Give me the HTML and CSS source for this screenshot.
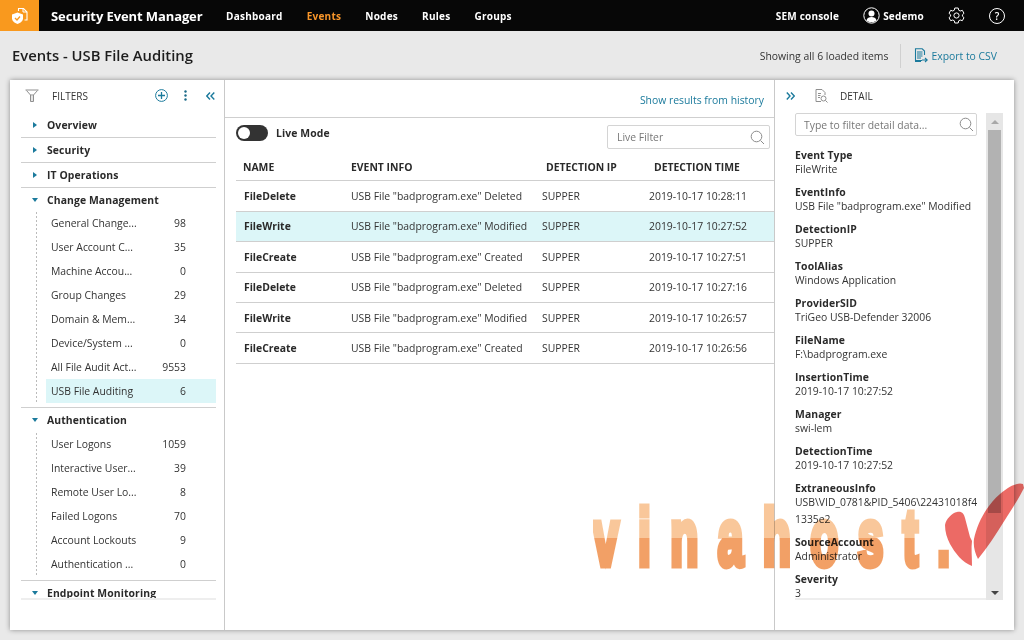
FILE: index.html
```html
<!DOCTYPE html>
<html lang="en">
<head>
<meta charset="utf-8">
<title>Events - USB File Auditing</title>
<link rel="stylesheet" href="styles.css">
</head>
<body>
<header class="topbar">
  <div class="logo">
    <svg width="18" height="18" viewBox="0 0 18 18" fill="none"><path d="M7.500 4V1.500h5l3.500 3.500v8h-2.500" stroke="#fff" stroke-width="1.100"/><path d="M12 1.500V5h4" stroke="#fff" stroke-width="1"/><path d="M6.500 5.500 12 7.500v3.700c0 2.900-2.500 4.600-5.500 5.800C3.500 15.800 1 14.100 1 11.200V7.500z" fill="#fff"/><path d="M4 11l2 2 3-3.500" stroke="#f9991e" stroke-width="1.300"/></svg>
  </div>
  <div class="brand">Security Event Manager</div>
  <nav class="nav">
    <span>Dashboard</span><span class="active">Events</span><span>Nodes</span><span>Rules</span><span>Groups</span>
  </nav>
  <div class="top-right">
    <span>SEM console</span>
    <span class="user">
      <svg width="17" height="17" viewBox="0 0 17 17" fill="none"><circle cx="8.500" cy="8.500" r="7.700" stroke="#fff" stroke-width="1"/><circle cx="8.500" cy="6.500" r="3" fill="#fff"/><path d="M3.500 13.500c.6-2.600 2.600-3.500 5-3.500s4.400.9 5 3.500c-1.300 1.200-3 1.800-5 1.800s-3.700-.6-5-1.800z" fill="#fff"/></svg>
      Sedemo
    </span>
    <svg class="gear" width="17" height="17" viewBox="0 0 17 17" fill="none" stroke="#fff" stroke-width="1"><path d="M6.800 1h3.400l.5 2.200 1.500.8 2.100-.7 1.700 3-1.600 1.500v1.400l1.600 1.500-1.700 3-2.100-.7-1.500.8-.5 2.200H6.800l-.5-2.200-1.500-.8-2.100.7-1.700-3 1.600-1.500V7.800L1 6.300l1.700-3 2.100.7 1.500-.8z"/><circle cx="8.500" cy="8.500" r="2.600"/></svg>
    <span class="help">?</span>
  </div>
</header>

<div class="subbar">
  <h1>Events - USB File Auditing</h1>
  <div class="sub-right">
    <span class="showing">Showing all 6 loaded items</span>
    <span class="export">
      <svg width="14" height="15" viewBox="0 0 14 15" fill="none" stroke="#1b7a9c"><path d="M8 12.500H1.500V.8h6.700l2.300 2.300V7" stroke-width="1.100"/><path d="M3 4h5.500M3 6h5.500M3 8h5.500M3 10h4" stroke-width="1.200"/><path d="M1 13.500h6M8 12h5M11 10l2.300 2-2.300 2" stroke-width="1.100"/></svg>
      Export to CSV
    </span>
  </div>
</div>

<main class="card">
  <aside class="filters">
    <div class="panel-head">
      <svg class="funnel" width="14" height="13" viewBox="0 0 14 13" fill="none" stroke="#8f8f8f" stroke-width="1"><path d="M.5 1h13M1.500 1.500 5.500 6h3l4-4.500M5.500 6v6.500h3V6"/><path d="M7 7v5" stroke="#ccc"/></svg>
      <span class="panel-title">FILTERS</span>
      <span class="head-tools">
        <svg width="13" height="13" viewBox="0 0 13 13" fill="none" stroke="#1b7a9c" stroke-width="1"><circle cx="6.500" cy="6.500" r="5.900"/><path d="M6.500 3v7M3 6.500h7" stroke-width="1.300"/></svg>
        <svg class="dots" width="3" height="11" viewBox="0 0 3 11" fill="#1b6a88"><circle cx="1.500" cy="1.500" r="1.200"/><circle cx="1.500" cy="5.500" r="1.200"/><circle cx="1.500" cy="9.500" r="1.200"/></svg>
        <svg class="chev-left" width="9" height="8" viewBox="0 0 9 8" fill="none" stroke="#1b7a9c" stroke-width="1.400"><path d="M4 .5.800 4 4 7.500M8.300.5 5 4l3.300 3.500"/></svg>
      </span>
    </div>
    <div class="tree">
      <div class="group"><div class="group-title"><i class="tri-r"></i>Overview</div></div>
      <div class="group"><div class="group-title"><i class="tri-r"></i>Security</div></div>
      <div class="group"><div class="group-title"><i class="tri-r"></i>IT Operations</div></div>
      <div class="group">
        <div class="group-title"><i class="tri-d"></i>Change Management</div>
        <ul class="items">
          <li><span>General Change...</span><b>98</b></li>
          <li><span>User Account C...</span><b>35</b></li>
          <li><span>Machine Accou...</span><b>0</b></li>
          <li><span>Group Changes</span><b>29</b></li>
          <li><span>Domain &amp; Mem...</span><b>34</b></li>
          <li><span>Device/System ...</span><b>0</b></li>
          <li><span>All File Audit Act...</span><b>9553</b></li>
          <li class="sel"><span>USB File Auditing</span><b>6</b></li>
        </ul>
      </div>
      <div class="group">
        <div class="group-title"><i class="tri-d"></i>Authentication</div>
        <ul class="items">
          <li><span>User Logons</span><b>1059</b></li>
          <li><span>Interactive User...</span><b>39</b></li>
          <li><span>Remote User Lo...</span><b>8</b></li>
          <li><span>Failed Logons</span><b>70</b></li>
          <li><span>Account Lockouts</span><b>9</b></li>
          <li><span>Authentication ...</span><b>0</b></li>
        </ul>
      </div>
      <div class="group"><div class="group-title"><i class="tri-d"></i>Endpoint Monitoring</div></div>
    </div>
  </aside>

  <section class="center">
    <div class="history"><span>Show results from history</span></div>
    <div class="tools">
      <span class="toggle"><i></i></span>
      <span class="live">Live Mode</span>
      <span class="live-filter">Live Filter
        <svg class="search" width="15" height="15" viewBox="0 0 15 15" fill="none" stroke="#8c8c8c" stroke-width="1"><circle cx="6.500" cy="6.500" r="5.300"/><path d="m10.500 10.500 3.500 3.500"/></svg>
      </span>
    </div>
    <div class="table">
      <div class="row head"><span>NAME</span><span>EVENT INFO</span><span>DETECTION IP</span><span>DETECTION TIME</span></div>
      <div class="row"><b>FileDelete</b><span>USB File "badprogram.exe" Deleted</span><span>SUPPER</span><span>2019-10-17 10:28:11</span></div>
      <div class="row sel"><b>FileWrite</b><span>USB File "badprogram.exe" Modified</span><span>SUPPER</span><span>2019-10-17 10:27:52</span></div>
      <div class="row"><b>FileCreate</b><span>USB File "badprogram.exe" Created</span><span>SUPPER</span><span>2019-10-17 10:27:51</span></div>
      <div class="row"><b>FileDelete</b><span>USB File "badprogram.exe" Deleted</span><span>SUPPER</span><span>2019-10-17 10:27:16</span></div>
      <div class="row"><b>FileWrite</b><span>USB File "badprogram.exe" Modified</span><span>SUPPER</span><span>2019-10-17 10:26:57</span></div>
      <div class="row"><b>FileCreate</b><span>USB File "badprogram.exe" Created</span><span>SUPPER</span><span>2019-10-17 10:26:56</span></div>
    </div>
  </section>

  <aside class="detail">
    <div class="panel-head detail-head">
      <svg class="chev" width="9" height="8" viewBox="0 0 9 8" fill="none" stroke="#1b7a9c" stroke-width="1.400"><path d="M.8.500 4 4 .8 7.500M5 .5 8.300 4 5 7.500"/></svg>
      <svg class="doc" width="13" height="14" viewBox="0 0 13 14" fill="none" stroke="#8f8f8f" stroke-width="1"><path d="M1 .5h6l3 3v2.500M1 .5v12h5M3 4.500h3M3 6.500h2.500M3 8.500h2"/><circle cx="8.500" cy="9.500" r="2.500"/><path d="m10.500 11.500 2 2"/></svg>
      <span class="panel-title">DETAIL</span>
    </div>
    <div class="detail-body">
      <div class="detail-main">
        <div class="detail-search">Type to filter detail data...
          <svg class="search" width="15" height="15" viewBox="0 0 15 15" fill="none" stroke="#8c8c8c" stroke-width="1"><circle cx="6.500" cy="6.500" r="5.300"/><path d="m10.500 10.500 3.500 3.500"/></svg>
        </div>
        <dl class="fields">
          <dt>Event Type</dt><dd>FileWrite</dd>
          <dt>EventInfo</dt><dd>USB File "badprogram.exe" Modified</dd>
          <dt>DetectionIP</dt><dd>SUPPER</dd>
          <dt>ToolAlias</dt><dd>Windows Application</dd>
          <dt>ProviderSID</dt><dd>TriGeo USB-Defender 32006</dd>
          <dt>FileName</dt><dd>F:\badprogram.exe</dd>
          <dt>InsertionTime</dt><dd>2019-10-17 10:27:52</dd>
          <dt>Manager</dt><dd>swi-lem</dd>
          <dt>DetectionTime</dt><dd>2019-10-17 10:27:52</dd>
          <dt>ExtraneousInfo</dt><dd>USB\VID_0781&amp;PID_5406\22431018f4<br>1335e2</dd>
          <dt>SourceAccount</dt><dd>Administrator</dd>
          <dt>Severity</dt><dd>3</dd>
        </dl>
      </div>
      <div class="scrollbar">
        <i class="up"></i>
        <div class="thumb"></div>
        <i class="down"></i>
      </div>
    </div>
  </aside>
</main>

<div class="watermark">
  <span class="wm-text">vinahost.</span>
  <svg class="wm-check" width="79" height="84" viewBox="945 483 79 84"><path d="M945 525C946 519 952 513 957 512 962 511 964 514 965 518L970 537 972 541C971 548 972 556 972 566 962 562 955 553 950 544 947 538 945 532 945 525z" fill="#e7453f" fill-opacity=".8"/><path d="M974 539C977 524 986 506 1000 494 1009 486 1018 482 1023 484L1024 488C1018 500 1010 512 1003 523 995 536 987 548 978 559 975 553 973 546 974 539z" fill="#e7453f" fill-opacity=".8"/></svg>
</div>
</body>
</html>
```
FILE: styles.css
```css
* { box-sizing: border-box; }
html, body { margin: 0; height: 100%; }
body {
  width: 1024px; height: 640px; overflow: hidden; position: relative;
  background: #e9e9e9; color: #222;
  font-family: "Open Sans", "Liberation Sans", sans-serif;
  font-size: 10.4px;
  display: flex; flex-direction: column;
}
ul, dl, dd, h1 { margin: 0; padding: 0; }
ul { list-style: none; }

.topbar { height: 31px; flex: none; background: #070707; color: #fff; display: flex; align-items: center; font-weight: 700; }
.logo { width: 39px; height: 31px; background: #f9991e; display: flex; align-items: center; justify-content: center; }
.brand { font-size: 13px; margin-left: 12px; width: 175px; letter-spacing: -.1px; }
.nav { display: flex; gap: 24px; font-size: 10px; letter-spacing: .25px; }
.nav .active { color: #f9962a; }
.top-right { margin-left: auto; display: flex; align-items: center; font-size: 10px; letter-spacing: .2px; padding-right: 19px; }
.user { display: flex; align-items: center; gap: 3px; margin-left: 24px; }
.gear { margin-left: 24px; }
.help { width: 16px; height: 16px; border: 1px solid #fff; border-radius: 50%; margin-left: 24px; display: flex; align-items: center; justify-content: center; font-size: 10px; font-weight: 600; }

.subbar { height: 49px; flex: none; display: flex; align-items: center; justify-content: space-between; padding: 0 27px 0 12px; }
h1 { font-size: 14.8px; font-weight: 600; color: #1d1d1d; margin-top: -2px; }
.sub-right { display: flex; align-items: center; }
.showing { color: #333; padding-right: 12px; height: 24px; line-height: 24px; border-right: 1px solid #d0d0d0; }
.export { color: #1b7a9c; display: flex; align-items: center; gap: 3px; margin-left: 13px; }

.card { width: 1004px; height: 550px; flex: none; margin-left: 10px; background: #fff; box-shadow: 0 0 5px rgba(0,0,0,.4); display: flex; }
.filters { width: 215px; flex: none; border-right: 1px solid #c9c9c9; display: flex; flex-direction: column; }
.panel-head { height: 33px; flex: none; display: flex; align-items: center; padding-bottom: 2px; }
.panel-title { color: #333; font-size: 10px; }
.funnel { margin-left: 15px; }
.filters .panel-title { margin-left: 13px; }
.head-tools { margin-left: auto; display: flex; align-items: center; padding-right: 9px; }
.dots { margin-left: 16px; }
.chev-left { margin-left: 19px; }
.tree { margin: 0 8px 0 11px; height: 487px; overflow: hidden; border-bottom: 2px solid #eee; }
.group { border-bottom: 1px solid #cfcfcf; }
.group-title { height: 24px; display: flex; align-items: center; font-weight: 700; color: #2a2a2a; padding-left: 26px; position: relative; letter-spacing: .1px; }
.group-title i { position: absolute; }
.tri-r { left: 12px; width: 0; height: 0; border-left: 4px solid #1b7a9c; border-top: 3.5px solid transparent; border-bottom: 3.5px solid transparent; }
.tri-d { left: 11px; width: 0; height: 0; border-top: 4px solid #1b7a9c; border-left: 3.5px solid transparent; border-right: 3.5px solid transparent; }
.items { margin: -.6px 0 4px 14px; padding-left: 11px; background: radial-gradient(circle, #bbb 1px, transparent 1.1px) 0 0 / 3px 4px repeat-y; }
.items li { height: 24px; display: flex; align-items: center; color: #333; padding-left: 5px; padding-right: 30px; justify-content: space-between; white-space: nowrap; }
.items b { font-weight: 400; }
.items li.sel { background: #dcf6f8; }

.center { width: 550px; flex: none; border-right: 1px solid #c9c9c9; display: flex; flex-direction: column; }
.history { height: 38px; flex: none; border-bottom: 1px solid #cfcfcf; color: #1b7a9c; display: flex; justify-content: flex-end; align-items: center; padding: 3px 10px 0 0; }
.tools { height: 38px; flex: none; display: flex; align-items: flex-start; padding-left: 11px; padding-top: 7px; }
.toggle { width: 32px; height: 16px; border-radius: 8px; background: #333; display: block; position: relative; }
.toggle i { position: absolute; left: 2px; top: 2px; width: 12px; height: 12px; border-radius: 50%; background: #fff; }
.live { margin-left: 8px; font-weight: 700; color: #2a2a2a; line-height: 16px; letter-spacing: .1px; }
.live-filter { margin-left: auto; margin-right: 4px; width: 163px; height: 24px; border: 1px solid #d4d4d4; border-radius: 2px; color: #777; display: flex; align-items: center; justify-content: space-between; padding: 0 4px 0 9px; }

.table { margin-left: 11px; }
.row { display: grid; grid-template-columns: 107px 191px 107px 1fr; height: 30.4px; align-items: center; border-bottom: 1px solid #cfcfcf; color: #333; padding-left: 8px; }
.row b { color: #2a2a2a; }
.row.head { height: 25.4px; font-weight: 700; color: #2a2a2a; padding-left: 7px; grid-template-columns: 108px 195px 108px 1fr; padding-bottom: 2px; }
.row.sel { background: #dcf6f8; }

.detail { flex: 1; display: flex; flex-direction: column; }
.detail-head .chev { margin-left: 11px; }
.doc { margin-left: 20px; }
.detail-head .panel-title { margin-left: 12px; }
.detail-body { display: flex; margin-left: 20px; margin-right: 11px; height: 487px; border-bottom: 2px solid #eee; }
.detail-main { flex: 1; overflow: hidden; min-width: 0; }
.detail-search { width: 182px; height: 23px; border: 1px solid #d4d4d4; border-radius: 2px; color: #777; display: flex; align-items: center; justify-content: space-between; padding: 0 2px 0 8px; }
.fields { margin-top: 12px; white-space: nowrap; }
.fields dt { font-weight: 700; color: #2a2a2a; height: 14px; line-height: 14px; letter-spacing: .1px; }
.fields dd { color: #333; line-height: 17px; margin-top: -1px; margin-bottom: 7px; }
.scrollbar { width: 17px; flex: none; background: #e6e6e6; position: relative; height: 487px; padding: 17px 2px 0; }
.thumb { height: 383px; background: #b2b2b2; }
.scrollbar i { position: absolute; left: 5px; width: 0; height: 0; border-left: 4px solid transparent; border-right: 4px solid transparent; }
.up { top: 7px; border-bottom: 4px solid #a8a8a8; }
.down { bottom: 5px; border-top: 4px solid #444; }

.watermark { position: absolute; left: 593px; top: 482px; width: 431px; height: 92px; pointer-events: none; mix-blend-mode: multiply; }
.wm-text {
  position: absolute; left: 0; top: 16px; display: block; white-space: nowrap; transform-origin: 0 0; transform: scale(1, 1.72);
  font-family: "Liberation Sans", sans-serif; font-weight: 700; font-size: 46px; line-height: 46px; letter-spacing: 19.4px;
  background: linear-gradient(#f9c79a 0 50%, #f2a066 50% 100%);
  -webkit-background-clip: text; background-clip: text; color: transparent;
  -webkit-text-stroke: 4px transparent;
}
.wm-check { position: absolute; left: 352px; top: 1px; }
```
